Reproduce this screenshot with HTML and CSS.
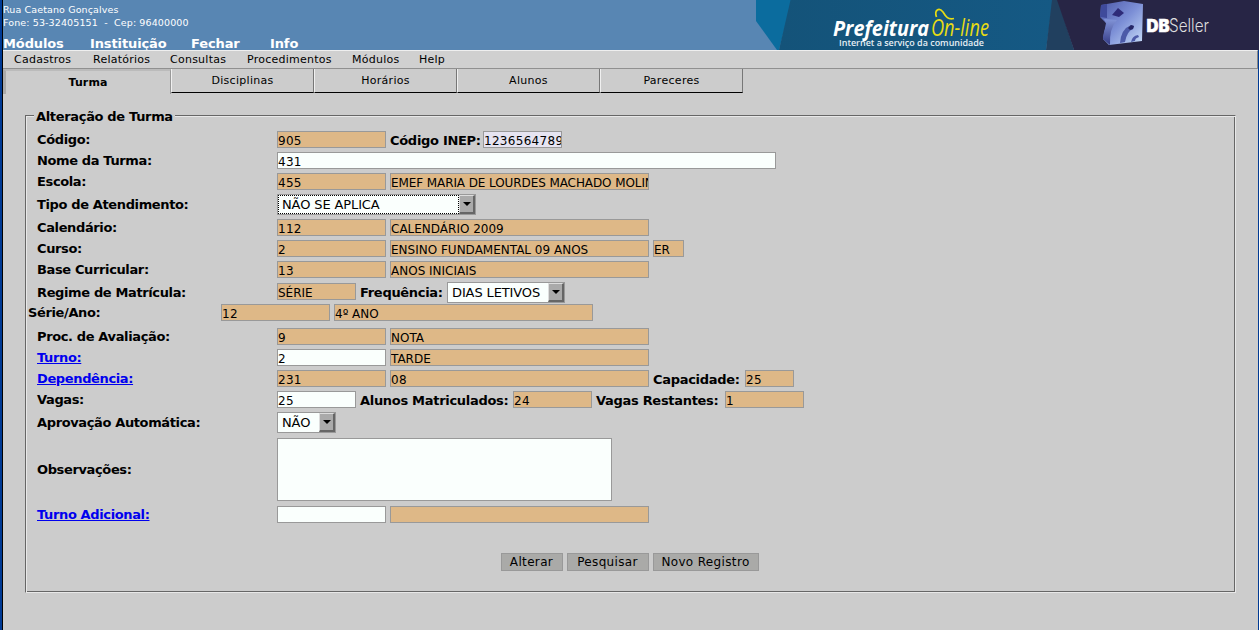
FILE: index.html
```html
<!DOCTYPE html>
<html lang="pt-BR">
<head>
<meta charset="utf-8">
<title>Alteração de Turma</title>
<link rel="stylesheet" href="styles.css">
</head>
<body>
<div class="window">
  <header class="header">
    <div class="header-left">
      <div class="address">Rua Caetano Gonçalves<br>Fone: 53-32405151 &nbsp;-&nbsp; Cep: 96400000</div>
      <nav class="main-menu"><span class="mm1">Módulos</span><span class="mm2">Instituição</span><span class="mm3">Fechar</span><span>Info</span></nav>
    </div>
    <svg class="banner" width="503" height="50" viewBox="756 0 503 50">
      <defs>
        <linearGradient id="cube" x1="0" y1="0" x2="1" y2="1"><stop offset="0" stop-color="#4c58a8"/><stop offset=".5" stop-color="#7c8fd6"/><stop offset="1" stop-color="#c9def9"/></linearGradient>
        <linearGradient id="side" x1="0" y1="0" x2="0" y2="1"><stop offset="0" stop-color="#8295d8"/><stop offset="1" stop-color="#343a85"/></linearGradient>
        <linearGradient id="teal" x1="0" y1="0" x2="1" y2="0"><stop offset="0" stop-color="#145379"/><stop offset="1" stop-color="#155984"/></linearGradient>
      </defs>
      <path d="M756 0H792L779 50H777L756 21Z" fill="#0b6c9e"/>
      <path d="M790.500 0H1053L1046 50H779Z" fill="url(#teal)"/>
      <path d="M1052 0H1058L1074 50H1046Z" fill="#21405f"/>
      <path d="M1057 0H1259V50H1074Z" fill="#272545"/>
      <text class="logo-pref" x="833" y="36" textLength="96" lengthAdjust="spacingAndGlyphs">Prefeitura</text>
      <text class="logo-online" x="931" y="36" textLength="58" lengthAdjust="spacingAndGlyphs">On-line</text>
      <path d="M936.500 17C934 10 939 7 943 12C946 17 948 20 954 18.500" fill="none" stroke="#e8dc13" stroke-width="1.700"/>
      <text class="logo-sub" x="839" y="46" textLength="145" lengthAdjust="spacingAndGlyphs">Internet a serviço da comunidade</text>
      <path d="M1101 5L1124 1L1143 4L1142 41L1109 45L1103 39L1106 23L1100 17Z" fill="url(#cube)"/>
      <path d="M1101 5L1107 4V18L1100 17Z" fill="#3f4a9b"/>
      <path d="M1104 19L1117 20Q1109 29 1110 45L1103 39Q1103 32 1107 25Z" fill="url(#side)"/>
      <path d="M1118 8L1124 13L1119 17L1112 15Z" fill="#2e2b78"/>
      <path d="M1120 43Q1121 29 1131 25L1134 26L1133 29Q1127 31 1125 42ZM1131 42Q1132 36 1138 35L1139 37Q1135 38 1135 41Z" fill="#4c5aa8"/>
      <path d="M1128 28L1131 25L1134 26L1133 29L1130 30Z" fill="#262765"/>
      <text class="logo-db" x="1146.500" y="31.500" textLength="23" lengthAdjust="spacingAndGlyphs">DB</text>
      <text class="logo-seller" x="1169" y="31.500" textLength="40" lengthAdjust="spacingAndGlyphs">Seller</text>
    </svg>
  </header>
  <div class="work">
    <nav class="menu"><span class="m1">Cadastros</span><span class="m2">Relatórios</span><span class="m3">Consultas</span><span class="m4">Procedimentos</span><span class="m5">Módulos</span><span>Help</span></nav>
    <div class="tabs"><div class="tab active">Turma</div><div class="tab">Disciplinas</div><div class="tab">Horários</div><div class="tab">Alunos</div><div class="tab">Pareceres</div></div>
    <section class="group">
      <div class="legend-line"><span class="cap"></span><h1 class="legend">Alteração de Turma</h1><span class="rule"></span></div>
      <div class="form">
        <div class="row"><span class="label">Código:</span><span class="field num code">905</span><b class="t-inep">Código INEP:</b><span class="field num inep">1236564789</span></div>
        <div class="row"><span class="label">Nome da Turma:</span><span class="field num edit name">431</span></div>
        <div class="row"><span class="label">Escola:</span><span class="field num code">455</span><span class="field desc school">EMEF MARIA DE LOURDES MACHADO MOLIN</span></div>
        <div class="row tall"><span class="label">Tipo de Atendimento:</span><span class="select focus sel-type"><span class="value">NÃO SE APLICA</span><i class="arrow"></i></span></div>
        <div class="row"><span class="label">Calendário:</span><span class="field num code">112</span><span class="field desc">CALENDÁRIO 2009</span></div>
        <div class="row"><span class="label">Curso:</span><span class="field num code">2</span><span class="field desc">ENSINO FUNDAMENTAL 09 ANOS</span><span class="field er">ER</span></div>
        <div class="row"><span class="label">Base Curricular:</span><span class="field num code">13</span><span class="field desc">ANOS INICIAIS</span></div>
        <div class="row regime"><span class="label">Regime de Matrícula:</span><span class="field short">SÉRIE</span><b class="t-freq">Frequência:</b><span class="select sel-freq"><span class="value">DIAS LETIVOS</span><i class="arrow"></i></span></div>
        <div class="row serie"><span class="label">Série/Ano:</span><span class="field num code">12</span><span class="field desc">4º ANO</span></div>
        <div class="row"><span class="label">Proc. de Avaliação:</span><span class="field num code">9</span><span class="field desc">NOTA</span></div>
        <div class="row"><a class="label link">Turno:</a><span class="field num code edit">2</span><span class="field desc">TARDE</span></div>
        <div class="row"><a class="label link">Dependência:</a><span class="field num code">231</span><span class="field num desc">08</span><b class="t-cap">Capacidade:</b><span class="field num cap-f">25</span></div>
        <div class="row"><span class="label">Vagas:</span><span class="field num short edit">25</span><b class="t-mat">Alunos Matriculados:</b><span class="field num short">24</span><b class="t-rest">Vagas Restantes:</b><span class="field num short">1</span></div>
        <div class="row tall"><span class="label">Aprovação Automática:</span><span class="select sel-auto"><span class="value">NÃO</span><i class="arrow"></i></span></div>
        <div class="row notes"><span class="label">Observações:</span><span class="area"></span></div>
        <div class="row"><a class="label link">Turno Adicional:</a><span class="field code edit"></span><span class="field desc"></span></div>
      </div>
      <div class="actions"><button class="b1">Alterar</button><button class="b2">Pesquisar</button><button class="b3">Novo Registro</button></div>
    </section>
  </div>
</div>
</body>
</html>
```
FILE: styles.css
```css
* { box-sizing: border-box; }
body { margin: 0; height: 630px; overflow: hidden; background: #ccc; color: #000; font-family: "DejaVu Sans", sans-serif; font-size: 13px; }
.window { height: 630px; border-left: 2px solid #003a94; display: flex; flex-direction: column; }
.header { height: 50px; flex: none; display: flex; border-left: 1px solid #000; background: #5886b3; color: #fff; overflow: hidden; }
.header-left { flex: 1; }
.banner { flex: none; display: block; }
.address { font-size: 9.5px; letter-spacing: 0.12px; line-height: 13px; padding-top: 3px; height: 37px; }
.main-menu { display: flex; font-weight: bold; font-size: 13px; letter-spacing: -0.12px; line-height: 14px; height: 13px; }
.mm1 { width: 87px; } .mm2 { width: 101px; } .mm3 { width: 79px; }
.logo-pref { font: italic bold 22px "Open Sans", sans-serif; fill: #fff; }
.logo-online { font: italic 23px "Open Sans", sans-serif; fill: #e8dc13; }
.logo-sub { font: 600 9.5px "Open Sans", sans-serif; fill: #e6eef4; }
.logo-db { font: 900 17px Inter, sans-serif; fill: #fff; stroke: #fff; stroke-width: 0.5px; }
.logo-seller { font: 300 18px Inter, sans-serif; fill: #ddd; }

.work { height: 580px; border-left: 1px solid #000; border-right: 1px solid #003a94; }
.menu { display: flex; height: 19px; padding-left: 11px; background: #d0d0d0; border-top: 1px solid #efefef; border-bottom: 1px solid #909090; border-right: 1px solid #888; font-size: 11px; letter-spacing: 0.25px; line-height: 17px; }
.m1 { width: 79px; } .m2 { width: 77px; } .m3 { width: 77px; } .m4 { width: 105px; } .m5 { width: 67px; }
.tabs { display: flex; height: 25px; align-items: flex-start; }
.tab { width: 143px; height: 24px; text-align: center; font-size: 11px; letter-spacing: 0.3px; line-height: 23px; border-left: 1px solid #f0f0f0; border-right: 1px solid #777; border-bottom: 1px solid #000; }
.tab.active { width: 168px; height: 25px; font-weight: bold; letter-spacing: 0.1px; border-left: 3px solid #aaa; border-right: 1px solid #999; border-top: 2px solid #bbb; border-bottom: 0; }

.group { margin: 15px 0 0 22px; width: 1211px; display: flex; flex-direction: column; }
.legend-line { display: flex; height: 14px; }
.cap, .rule { margin-top: 6px; height: 8px; border-top: 1px solid #666; }
.cap { width: 9px; border-left: 1px solid #666; box-shadow: inset 1px 1px #e8e8e8; }
.rule { flex: 1; border-right: 1px solid #e8e8e8; box-shadow: inset 0 1px #e8e8e8, inset -1px 0 #666; }
.legend { margin: 0; width: 141px; padding-left: 2px; font-size: 13px; letter-spacing: -0.33px; line-height: 15px; white-space: nowrap; }
.form { border-left: 1px solid #666; border-right: 1px solid #e8e8e8; box-shadow: inset 1px 0 #e8e8e8, inset -1px 0 #666; padding: 6px 0 0 11px; height: 412px; }
.row { display: flex; height: 21px; align-items: center; gap: 4px; font-weight: bold; white-space: nowrap; }
.row b { line-height: 17px; padding-top: 1px; letter-spacing: -0.3px; }
.label { width: 236px; line-height: 17px; padding-bottom: 1px; flex: none; letter-spacing: -0.37px; }
.link { color: #00e; text-decoration: underline; }
.tall { height: 25px; }
.regime { height: 23px; align-items: flex-start; padding-top: 2px; }
.regime .label { padding-top: 2px; }
.regime .field { margin-top: 1px; }
.regime b { padding-top: 2px; }
.serie { height: 23px; align-items: flex-start; padding-top: 1px; margin-left: -9px; }
.serie .label { width: 189px; }
.notes { height: 69px; align-items: flex-start; padding-top: 3px; }
.notes .label { line-height: 64px; }
.field { height: 17px; border: 1px solid #999; background: #deb887; font-weight: normal; font-size: 12px; line-height: 18px; overflow: hidden; flex: none; }
.num { letter-spacing: 0.3px; }
.school { letter-spacing: -0.09px; }
.code { width: 109px; } .desc { width: 259px; } .short { width: 79px; } .er { width: 31px; } .cap-f { width: 49px; } .name { width: 499px; }
.inep { width: 79px; background: #e6e4f1; }
.edit { background: #fafffd; }
.t-inep { width: 89px; } .t-freq { width: 83px; } .t-cap { width: 88px; } .t-mat { width: 149px; } .t-rest { width: 125px; }
.select { height: 21px; display: flex; border: 1px solid #999; background: #fafffd; font-weight: normal; letter-spacing: -0.12px; line-height: 19px; }
.value { flex: 1; padding-left: 4px; }
.focus .value { border: 1px dotted #000; line-height: 17px; padding-left: 3px; }
.sel-type { width: 199px; } .sel-freq { width: 118px; } .sel-auto { width: 59px; }
.arrow { width: 16px; height: 19px; background: #aaa; border: 1px solid #ddd; border-right: 2px solid #666; border-bottom: 2px solid #666; display: flex; align-items: center; justify-content: center; }
.arrow::after { content: ""; margin-left: 1px; border: 4px solid transparent; border-top-color: #000; border-bottom: 0; }
.area { width: 335px; height: 63px; border: 1px solid #999; background: #fafffd; }
.actions { height: 58px; padding: 18px 2px 0 0; display: flex; justify-content: center; gap: 4px; border: 1px solid #666; border-top: 0; border-right-color: #e8e8e8; border-bottom-color: #e8e8e8; box-shadow: inset 1px 0 #e8e8e8, inset -1px -1px #666; }
button { height: 18px; border: 1px solid #999; background: #aaaaa8; padding: 1px 0 0; font: 12px/15px "DejaVu Sans", sans-serif; letter-spacing: 0.35px; }
.b1 { width: 62px; } .b2 { width: 82px; } .b3 { width: 106px; }
```
